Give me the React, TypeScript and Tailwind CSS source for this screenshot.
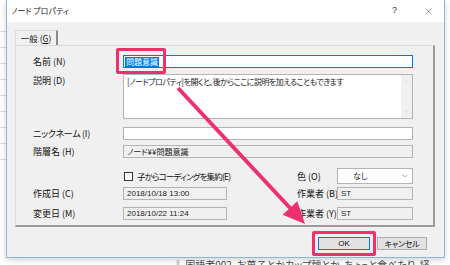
import { X, ChevronDown, ChevronUp } from 'lucide-react'

const jp = "font-['Noto_Sans_CJK_JP',sans-serif] [font-feature-settings:'palt']"

function Box({ value = '', gray = false, className = '' }: { value?: string; gray?: boolean; className?: string }) {
  return (
    <div
      className={`h-[13px] border border-[#b4b4b4] flex items-center px-[3px] text-[8px] leading-none text-[#222] ${gray ? 'bg-[#f0f0f0]' : 'bg-white'} ${className}`}
    >
      {value}
    </div>
  )
}

function Label({ children, className = '' }: { children: React.ReactNode; className?: string }) {
  return <div className={`text-[9px] leading-none text-[#111] shrink-0 whitespace-nowrap ${className}`}>{children}</div>
}

export default function App() {
  const sideLines = Array.from({ length: 9 })

  return (
    <div className={`relative w-[450px] h-[265px] overflow-hidden bg-white ${jp}`}>
      <div className="flex">
        {/* page behind the dialog */}
        <div className="w-[6px] pt-[16px] flex flex-col">
          {sideLines.map((_, i) => (
            <div key={i} className="h-[16px] border-b border-[#dcdcdc]" />
          ))}
        </div>

        <div className="w-[439px] h-[258px] flex flex-col border-x border-b border-[#8fb6dd] shadow-[0_2px_6px_rgba(0,0,0,0.18)]">
          {/* title bar */}
          <div className="h-[22px] bg-white flex items-center pl-[4px] pr-[10px]">
            <span className="text-[8px] text-[#222]">ノード プロパティ</span>
            <span className="ml-auto mr-[26px] text-[9px] text-[#333] font-['Liberation_Sans',sans-serif]">?</span>
            <X size={11} strokeWidth={1} className="text-[#333]" />
          </div>

          {/* body */}
          <div className="flex-1 bg-[#f0f0f0] pt-[8px] pl-[8px] pr-[9px] flex flex-col">
            <div className="flex">
              <div className="h-[15px] w-[43px] border-l border-t border-r-2 border-[#dadada] border-r-[#8a8a8a] bg-[#f0f0f0] flex items-center justify-center text-[8.5px] text-[#111]">
                一般 (<span className="underline">G</span>)
              </div>
            </div>

            <div className="border-l border-t border-[#dadada] border-r-2 border-r-[#9a9a9a] border-b-2 border-b-[#9a9a9a] pl-[17px] pr-[20px] pt-[9px] pb-[5px]">
              <div className="flex items-center">
                <Label className="w-[90px]">名前 (N)</Label>
                <div className="flex-1 h-[13px] border border-[#0078d7] bg-white flex items-center px-[1px]">
                  <span className="bg-[#0078d7] text-white text-[8px] leading-[10px] px-[1px]">問題意識</span>
                </div>
              </div>

              <div className="flex items-start mt-[6px]">
                <Label className="w-[90px] pt-[2px]">説明 (D)</Label>
                <div className="flex-1 h-[45px] border border-[#b4b4b4] bg-white flex">
                  <div className="flex-1 text-[8px] leading-none tracking-[-0.5px] text-[#222] pl-[3px] pt-[3px]">
                    [ノードプロパティ]を開くと、後からここに説明を加えることもできます
                  </div>
                  <div className="w-[11px] bg-[#f0f0f0] flex flex-col items-center justify-between py-[3px]">
                    <ChevronUp size={7} strokeWidth={1.5} className="text-[#c2c2c2]" />
                    <ChevronDown size={7} strokeWidth={1.5} className="text-[#c2c2c2]" />
                  </div>
                </div>
              </div>

              <div className="flex items-center mt-[8px]">
                <Label className="w-[90px] tracking-[-0.3px]">ニックネーム (I)</Label>
                <Box className="flex-1" />
              </div>

              <div className="flex items-center mt-[5px]">
                <Label className="w-[90px]">階層名 (H)</Label>
                <Box className="flex-1" gray value="ノード¥¥問題意識" />
              </div>

              <div className="flex items-center mt-[10px] h-[16px]">
                <div className="w-[91px] shrink-0" />
                <div className="w-[9px] h-[9px] border border-[#333] bg-white shrink-0" />
                <span className="ml-[4px] text-[8.5px] leading-none tracking-[-0.8px] text-[#111]">子からコーディングを集約(E)</span>
                <Label className="ml-auto w-[40px]">色 (O)</Label>
                <div className="w-[76px] h-[16px] border border-[#b4b4b4] bg-white flex items-center pl-[15px] pr-[3px] text-[8px] text-[#222]">
                  なし
                  <ChevronDown size={8} strokeWidth={1.5} className="ml-auto text-[#555]" />
                </div>
              </div>

              <div className="flex items-center mt-[3px]">
                <Label className="w-[90px]">作成日 (C)</Label>
                <Box className="w-[104px] font-['Liberation_Sans',sans-serif] text-[7.5px]" gray value="2018/10/18 13:00" />
                <Label className="ml-[70px] w-[40px]">作業者 (B)</Label>
                <Box className="flex-1 font-['Liberation_Sans',sans-serif]" gray value="ST" />
              </div>

              <div className="flex items-center mt-[7px]">
                <Label className="w-[90px]">変更日 (M)</Label>
                <Box className="w-[104px] font-['Liberation_Sans',sans-serif] text-[7.5px]" gray value="2018/10/22 11:24" />
                <Label className="ml-[70px] w-[40px]">作業者 (Y)</Label>
                <Box className="flex-1 font-['Liberation_Sans',sans-serif]" gray value="ST" />
              </div>
            </div>

            <div className="flex justify-end gap-[7px] mt-[10px] pr-[8px]">
              <button className="w-[52px] h-[13px] border border-[#0078d7] bg-[#e1e1e1] text-[8px] leading-none text-[#111] font-['Liberation_Sans',sans-serif]">
                OK
              </button>
              <button className="w-[50px] h-[13px] border border-[#adadad] bg-[#e1e1e1] text-[8px] leading-none tracking-[-0.3px] text-[#111]">
                キャンセル
              </button>
            </div>
          </div>
        </div>

        <div className="w-[5px]" />
      </div>

      <div className="pl-[173px] pt-[1px] text-[10px] leading-[12px] text-[#444] whitespace-nowrap">
        ‖ 国語者002, お菓子とかカップ麺とか、ちょっと食べたり、経
      </div>

      {/* annotations */}
      <div className="absolute left-[116px] top-[48px] w-[50px] h-[26px] border-[3px] border-[#f0306e] rounded-[2px]" />
      <div className="absolute left-[312px] top-[231px] w-[64px] h-[25px] border-[3px] border-[#f0306e] rounded-[2px]" />
      <svg className="absolute inset-0" width="450" height="265" viewBox="0 0 450 265">
        <line x1="178" y1="88" x2="291" y2="209" stroke="#f0306e" strokeWidth="4" />
        <polygon points="305,224 282.7,214.8 297.3,201.2" fill="#f0306e" />
      </svg>
    </div>
  )
}
